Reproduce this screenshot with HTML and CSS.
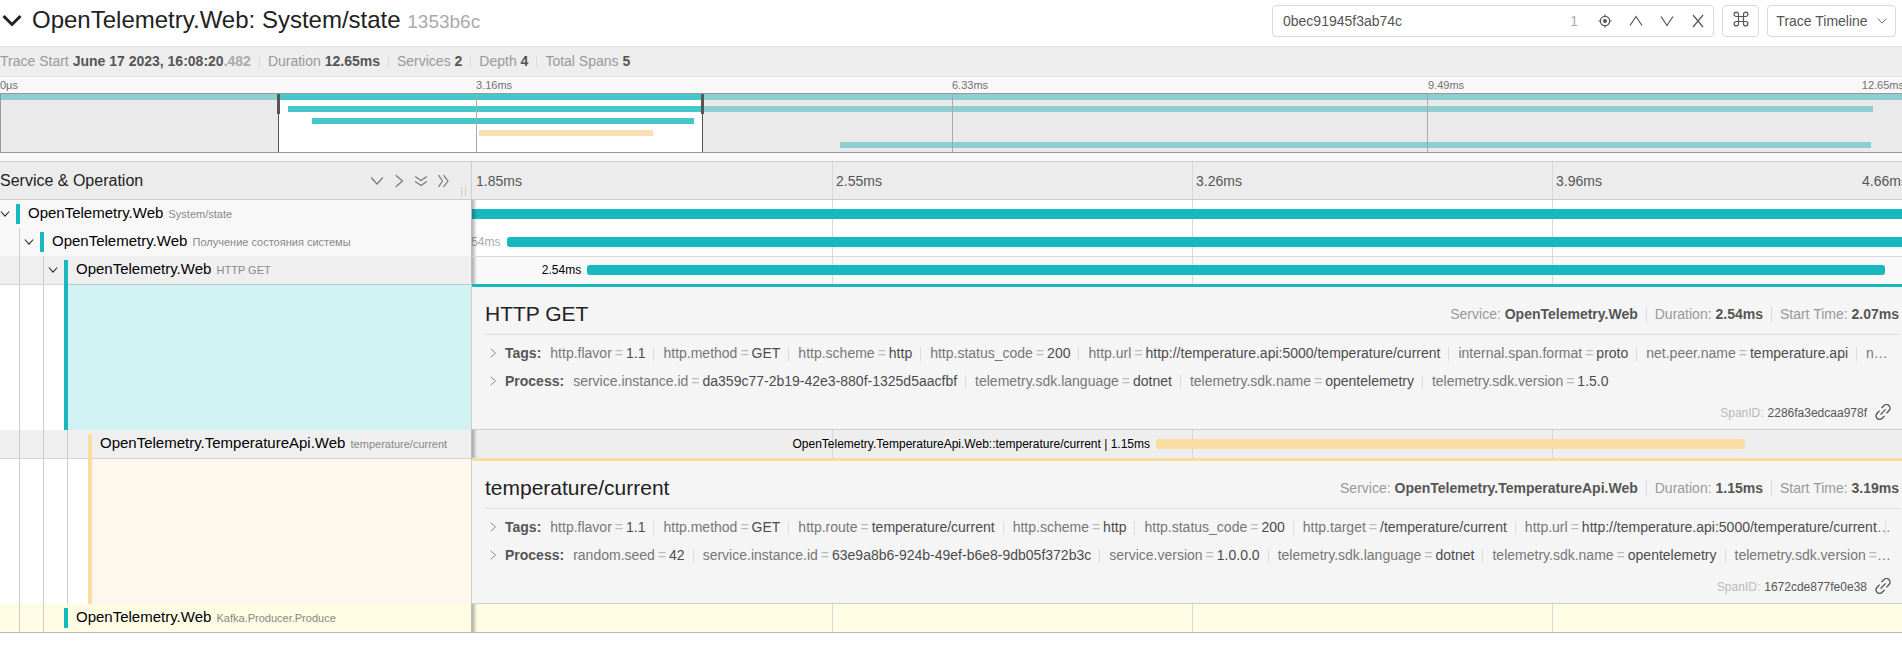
FILE: index.html
```html
<!DOCTYPE html>
<html lang="en">
<head>
<meta charset="utf-8">
<title>OpenTelemetry.Web: System/state</title>
<link rel="stylesheet" href="styles.css">
</head>
<body>
<svg class="defs" aria-hidden="true">
  <symbol id="down" viewBox="0 0 14 14"><path d="M1.200 3.500 7 10l5.800-6.500"/></symbol>
  <symbol id="up" viewBox="0 0 14 14"><path d="M1 11.500 7 2.500l6 9"/></symbol>
  <symbol id="right" viewBox="0 0 14 14"><path d="M3.800 1.200 10.500 7l-6.700 5.800"/></symbol>
  <symbol id="link" viewBox="0 0 14 14"><path d="M5.600 3.600 7.700 1.500a2.900 2.900 0 0 1 4.600 4.200L10 8.200M8.400 10.400 6.300 12.500a2.900 2.900 0 0 1-4.600-4.200L4 5.800M4.900 9.300l4.300-4.600"/></symbol>
</svg>
<div class="page">
  <header class="trace-header">
    <button class="title-toggle" aria-label="Collapse"><svg class="chevron" viewBox="0 0 20 14"><path d="m1.500 2 8.500 8.500L18.500 2"/></svg></button>
    <h1 class="title">OpenTelemetry.Web: System/state <small>1353b6c</small></h1>
    <div class="search">
      <input class="search-input" type="text" value="0bec91945f3ab74c" aria-label="Find">
      <span class="search-count">1</span>
      <button class="search-btn" aria-label="Locate"><svg class="icon" viewBox="0 0 14 14"><circle cx="7" cy="7" r="4.700"/><circle class="solid" cx="7" cy="7" r="2"/><path d="M7 .5v2M7 11.500v2M.5 7h2M11.500 7h2"/></svg></button>
      <button class="search-btn" aria-label="Previous"><svg class="icon"><use href="#up"/></svg></button>
      <button class="search-btn" aria-label="Next"><svg class="icon flip"><use href="#up"/></svg></button>
      <button class="search-btn" aria-label="Clear"><svg class="icon" viewBox="0 0 14 14"><path d="m2 1 10 12M12 1 2 13"/></svg></button>
    </div>
    <button class="btn shortcuts" aria-label="Keyboard shortcuts"><svg class="command" viewBox="0 0 16 16"><path d="M5.500 5.500h5v5h-5zM5.500 5.500H3.300a2.200 2.200 0 1 1 2.200-2.200zM10.500 5.500V3.300a2.200 2.200 0 1 1 2.200 2.200zM10.500 10.500h2.200a2.200 2.200 0 1 1-2.200 2.200zM5.500 10.500v2.200a2.200 2.200 0 1 1-2.200-2.200z"/></svg></button>
    <button class="btn view-menu">Trace Timeline <svg class="icon-s"><use href="#down"/></svg></button>
  </header>

  <ul class="overview">
    <li>Trace Start <b>June 17 2023, 16:08:20<i>.482</i></b></li>
    <li>Duration <b>12.65ms</b></li>
    <li>Services <b>2</b></li>
    <li>Depth <b>4</b></li>
    <li>Total Spans <b>5</b></li>
  </ul>

  <section class="minimap">
    <div class="mini-ticks"><span>0μs</span><span>3.16ms</span><span>6.33ms</span><span>9.49ms</span><span class="last">12.65ms</span></div>
    <div class="mini-graph">
      <div class="mini-rows">
        <div class="mini-bar" style="margin-left:0;width:100%"></div>
        <div class="mini-bar" style="margin-left:15.1%;width:83.3%"></div>
        <div class="mini-bar" style="margin-left:16.35%;width:20.1%"></div>
        <div class="mini-bar sand" style="margin-left:25.15%;width:9.15%"></div>
        <div class="mini-bar" style="margin-left:44.1%;width:54.2%"></div>
      </div>
      <div class="shade" style="left:0;width:14.6%"></div>
      <div class="shade" style="left:36.9%;right:0"></div>
      <div class="mini-grid"><i></i><i></i><i></i><i></i></div>
      <div class="scrub" style="left:14.57%"></div>
      <div class="scrub" style="left:36.85%"></div>
    </div>
  </section>

  <main class="timeline">
    <div class="row head">
      <div class="name-col">
        <h2 class="head-title">Service &amp; Operation</h2>
        <button class="collapser" aria-label="Expand +1"><svg class="icon"><use href="#down"/></svg></button>
        <button class="collapser" aria-label="Collapse +1"><svg class="icon"><use href="#right"/></svg></button>
        <button class="collapser" aria-label="Expand All"><svg class="icon" viewBox="0 0 14 14"><path d="m1.200 2.500 5.800 4 5.800-4M1.200 7.500l5.800 4 5.800-4"/></svg></button>
        <button class="collapser" aria-label="Collapse All"><svg class="icon" viewBox="0 0 14 14"><path d="m2.500 1.200 4 5.800-4 5.800M7.500 1.200l4.500 5.800-4.500 5.800"/></svg></button>
        <span class="grip"></span>
      </div>
      <div class="view-col ticks"><span>1.85ms</span><span>2.55ms</span><span>3.26ms</span><span>3.96ms</span><span class="last">4.66ms</span></div>
    </div>

    <div class="row span">
      <div class="name-col">
        <button class="toggle" aria-label="Collapse"><svg class="icon-s"><use href="#down"/></svg></button>
        <a class="name" href="#s1">OpenTelemetry.Web <small>System/state</small></a>
      </div>
      <div class="view-col ticks"><i></i><i></i><i></i><i></i><div class="track"><div class="bar" style="margin-left:0;width:100%"></div></div></div>
    </div>

    <div class="row span">
      <div class="name-col">
        <i class="guide"></i>
        <button class="toggle" aria-label="Collapse"><svg class="icon-s"><use href="#down"/></svg></button>
        <a class="name" href="#s2">OpenTelemetry.Web <small>Получение состояния системы</small></a>
      </div>
      <div class="view-col ticks"><i></i><i></i><i></i><i></i><div class="track"><div class="bar round" style="margin-left:2.4%;width:99%"><span class="label dim">10.54ms</span></div></div></div>
    </div>

    <div class="row span open">
      <div class="name-col">
        <i class="guide"></i><i class="guide"></i>
        <button class="toggle" aria-label="Collapse"><svg class="icon-s"><use href="#down"/></svg></button>
        <a class="name" href="#s3">OpenTelemetry.Web <small>HTTP GET</small></a>
      </div>
      <div class="view-col ticks"><i></i><i></i><i></i><i></i><div class="track"><div class="bar round" style="margin-left:8%;width:90.1%"><span class="label">2.54ms</span></div></div></div>
    </div>

    <div class="row detail">
      <div class="name-col">
        <i class="guide"></i><i class="guide"></i><i class="gap"></i><div class="tint"></div>
      </div>
      <section class="view-col panel">
        <div class="panel-head">
          <h2>HTTP GET</h2>
          <ul class="facts"><li>Service: <b>OpenTelemetry.Web</b></li><li>Duration: <b>2.54ms</b></li><li>Start Time: <b>2.07ms</b></li></ul>
        </div>
        <div class="kv"><svg class="icon-s"><use href="#right"/></svg><b>Tags:</b><ul><li>http.flavor<i>=</i><em>1.1</em></li><li>http.method<i>=</i><em>GET</em></li><li>http.scheme<i>=</i><em>http</em></li><li>http.status_code<i>=</i><em>200</em></li><li>http.url<i>=</i><em>http://temperature.api:5000/temperature/current</em></li><li>internal.span.format<i>=</i><em>proto</em></li><li>net.peer.name<i>=</i><em>temperature.api</em></li><li>net.peer.port<i>=</i><em>5000</em></li></ul></div>
        <div class="kv"><svg class="icon-s"><use href="#right"/></svg><b>Process:</b><ul><li>service.instance.id<i>=</i><em>da359c77-2b19-42e3-880f-1325d5aacfbf</em></li><li>telemetry.sdk.language<i>=</i><em>dotnet</em></li><li>telemetry.sdk.name<i>=</i><em>opentelemetry</em></li><li>telemetry.sdk.version<i>=</i><em>1.5.0</em></li></ul></div>
        <div class="span-id"><span>SpanID:</span> 2286fa3edcaa978f <button class="copy" aria-label="Copy link"><svg class="icon-l"><use href="#link"/></svg></button></div>
      </section>
    </div>

    <div class="row span sand open-alt">
      <div class="name-col">
        <i class="guide"></i><i class="guide"></i><i class="guide"></i><i class="gap"></i>
        <a class="name" href="#s4">OpenTelemetry.TemperatureApi.Web <small>temperature/current</small></a>
      </div>
      <div class="view-col ticks"><i></i><i></i><i></i><i></i><div class="track"><div class="bar round" style="margin-left:47.5%;width:40.9%"><span class="label">OpenTelemetry.TemperatureApi.Web::temperature/current | 1.15ms</span></div></div></div>
    </div>

    <div class="row detail sand">
      <div class="name-col">
        <i class="guide"></i><i class="guide"></i><i class="guide"></i><i class="gap"></i><div class="tint"></div>
      </div>
      <section class="view-col panel">
        <div class="panel-head">
          <h2>temperature/current</h2>
          <ul class="facts"><li>Service: <b>OpenTelemetry.TemperatureApi.Web</b></li><li>Duration: <b>1.15ms</b></li><li>Start Time: <b>3.19ms</b></li></ul>
        </div>
        <div class="kv"><svg class="icon-s"><use href="#right"/></svg><b>Tags:</b><ul><li>http.flavor<i>=</i><em>1.1</em></li><li>http.method<i>=</i><em>GET</em></li><li>http.route<i>=</i><em>temperature/current</em></li><li>http.scheme<i>=</i><em>http</em></li><li>http.status_code<i>=</i><em>200</em></li><li>http.target<i>=</i><em>/temperature/current</em></li><li>http.url<i>=</i><em>http://temperature.api:5000/temperature/current</em></li><li>internal.span.format<i>=</i><em>proto</em></li></ul></div>
        <div class="kv"><svg class="icon-s"><use href="#right"/></svg><b>Process:</b><ul><li>random.seed<i>=</i><em>42</em></li><li>service.instance.id<i>=</i><em>63e9a8b6-924b-49ef-b6e8-9db05f372b3c</em></li><li>service.version<i>=</i><em>1.0.0.0</em></li><li>telemetry.sdk.language<i>=</i><em>dotnet</em></li><li>telemetry.sdk.name<i>=</i><em>opentelemetry</em></li><li>telemetry.sdk.version<i>=</i><em>1.5.0</em></li></ul></div>
        <div class="span-id"><span>SpanID:</span> 1672cde877fe0e38 <button class="copy" aria-label="Copy link"><svg class="icon-l"><use href="#link"/></svg></button></div>
      </section>
    </div>

    <div class="row span match">
      <div class="name-col">
        <i class="guide"></i><i class="guide"></i><i class="gap"></i>
        <a class="name" href="#s5">OpenTelemetry.Web <small>Kafka.Producer.Produce</small></a>
      </div>
      <div class="view-col ticks"><i></i><i></i><i></i><i></i></div>
    </div>
  </main>
</div>
</body>
</html>
```
FILE: styles.css
```css
* { box-sizing: border-box; }

body {
  margin: 0;
  overflow: hidden;
  background: #fff;
  color: #555;
  font: 14px/20px "Liberation Sans", Arial, sans-serif;
}

/* The content bleeds past both window edges. */
.page { margin: 0 -10px 0 -8px; }

h1, h2, ul { margin: 0; padding: 0; font-weight: 400; }
ul { list-style: none; }
i, em { font-style: normal; }
a { color: inherit; text-decoration: none; }
button {
  display: flex;
  align-items: center;
  justify-content: center;
  padding: 0;
  border: 0;
  background: none;
  color: inherit;
  font: inherit;
  cursor: pointer;
}

.defs { display: none; }
svg { flex: none; fill: none; stroke: currentColor; stroke-width: 1.2; }
.icon { width: 14px; height: 14px; }
.icon-s { width: 10px; height: 10px; }
.icon-l { width: 16px; height: 16px; }
.flip { transform: rotate(180deg); }
.solid { fill: currentColor; stroke: none; }

/* Header */
.trace-header {
  display: flex;
  align-items: center;
  height: 47px;
  padding: 0 16px 5px 8px;
  border-bottom: 1px solid #e4e4e4;
}
.title-toggle { justify-content: flex-start; width: 32px; padding-left: 2px; color: #222; }
.chevron { width: 20px; height: 14px; stroke-width: 3; }
.title { flex: 1; color: #222; font-size: 24px; line-height: 32px; white-space: nowrap; }
.title small { color: #aaa; font-size: 19px; }

.search {
  display: flex;
  align-items: center;
  width: 442px;
  height: 32px;
  border: 1px solid #d9d9d9;
  border-radius: 4px;
}
.search-input {
  flex: 1;
  min-width: 0;
  padding: 0 10px;
  border: 0;
  outline: 0;
  background: none;
  color: #555;
  font: inherit;
}
.search-count { padding-right: 11px; color: #aaa; }
.search-btn { width: 31px; height: 30px; }
.btn {
  height: 32px;
  margin-left: 8px;
  border: 1px solid #d9d9d9;
  border-radius: 4px;
  background: #fff;
}
.shortcuts { width: 37px; padding-bottom: 3px; }
.command { width: 16px; height: 16px; }
.view-menu { gap: 9px; width: 129px; }

/* Overview facts */
.overview {
  display: flex;
  height: 30px;
  padding: 4px 8px;
  border-bottom: 1px solid #e4e4e4;
  background: #eee;
  color: #999;
}
.overview li { line-height: 21px; }
.overview li + li { margin-left: 8px; padding-left: 9px; background: linear-gradient(#ddd, #ddd) 0 5px / 1px 12px no-repeat; }
.overview b { color: #555; }
.overview b i { color: #aaa; }

/* Minimap */
.minimap { padding: 0 8px 8px; background: #f8f8f8; }
.mini-ticks {
  display: grid;
  grid-template-columns: repeat(4, 1fr);
  position: relative;
  height: 16px;
  color: #717171;
  font-size: 11px;
  line-height: 17px;
}
.last { position: absolute; right: 0; }
.mini-graph { position: relative; border: 1px solid #999; background: #fff; }
.mini-rows { display: grid; gap: 6px; padding-bottom: 4px; }
.mini-bar { height: 6px; background: #46c7cb; }
.mini-bar.sand { background: #fae1b3; }
.shade { position: absolute; top: 0; bottom: 0; background: rgba(214, 214, 214, .5); }
.mini-grid {
  display: grid;
  grid-template-columns: repeat(4, 1fr);
  position: absolute;
  inset: 0 0 0 -1px;
}
.mini-grid i + i { border-left: 1px solid #aaa; }
.scrub { position: absolute; top: 0; bottom: 0; width: 1px; background: #555; }
.scrub::before {
  content: "";
  position: absolute;
  top: 0;
  left: -1px;
  width: 3px;
  height: 20px;
  background: #555;
}

/* Timeline */
.timeline { --accent: #17b8be; --tint: #d1f1f2; border-top: 1px solid #ccc; border-bottom: 1px solid #bbb; }
.sand { --accent: #f8dca1; --tint: #fef7eb; }
.row { display: grid; grid-template-columns: 1fr 3fr; }
.name-col { display: flex; position: relative; min-width: 0; padding-left: 8px; border-right: 1px solid #ccc; }
.view-col { position: relative; min-width: 0; overflow: hidden; }
.ticks { display: grid; grid-template-columns: repeat(4, 1fr); }
.ticks > i + i, .ticks > span + span:not(.last) { border-left: 1px solid #d8d8d8; }

.head { height: 38px; border-bottom: 1px solid #ccc; background: #ececec; }
.head .name-col { align-items: center; padding-right: 17px; }
.head .ticks { line-height: 38px; }
.head .ticks span { padding-left: 4px; }
.head .ticks span + span { padding-left: 3px; }
.head .last { right: 4px; }
.head-title { flex: 1; color: #222; font-size: 16px; }
.collapser { width: 22px; height: 22px; color: #777; }
.grip { position: absolute; right: 5px; bottom: 3px; width: 5px; height: 9px; border: solid #ccc; border-width: 0 1px; }

.span { height: 28px; }
.span .name-col { border-right-color: #bbb; background: #f8f8f8; }
.span .view-col::after {
  content: "";
  position: absolute;
  inset: 0 auto 0 0;
  width: 5px;
  background: linear-gradient(to right, rgba(0, 0, 0, .3), rgba(0, 0, 0, 0));
}
.guide { flex: none; width: 20px; border-right: 1px solid #ccc; }
.guide + .guide { width: 24px; }
.gap { flex: none; width: 20px; }
.toggle { justify-content: flex-start; width: 16px; color: #222; }
.guide + .toggle { width: 20px; padding-left: 4px; }
.toggle svg { stroke-width: 1.5; }
.name {
  height: 20px;
  margin-top: 4px;
  padding-left: 8px;
  border-left: 4px solid var(--accent);
  color: #000;
  font-size: 15px;
  line-height: 18px;
  white-space: nowrap;
}
.name small { margin-left: 1px; color: #888; font-size: 11px; }
.track { position: absolute; inset: 9px 0; }
.bar { position: relative; height: 10px; background: var(--accent); }
.round { border-radius: 3px; }
.label { position: absolute; right: 100%; padding-right: 6px; color: #000; font-size: 12px; line-height: 11px; white-space: nowrap; }
.dim { color: #aaa; }

.open .name, .open-alt .name { height: 24px; }
.open .name-col, .open-alt .name-col { background: #efefef; }
.open .view-col { border-top: 1px solid #d8d8d8; background: #f8f8f8; }
.open-alt .view-col { background: #eee; }
.open .track { inset: 8px 0; }
.match .name-col, .match .view-col { background: #fffce4; }

/* Span detail */
.detail .name-col { background: linear-gradient(#d8d8d8, #d8d8d8) 0 0 / 100% 1px no-repeat; }
.tint { flex: 1; border-left: 4px solid var(--accent); background: linear-gradient(rgba(0, 0, 0, .15), rgba(0, 0, 0, .15)) 0 0 / 100% 1px no-repeat var(--tint); }
.panel { padding: 10px 13px 0; border-top: 3px solid var(--accent); border-bottom: 1px solid #ccc; background: #f5f5f5; }
.panel-head { display: flex; align-items: center; height: 38px; margin-bottom: 4px; padding-bottom: 3px; border-bottom: 1px solid #ddd; }
.panel-head h2 { flex: 1; color: #222; font-size: 21px; line-height: 28px; }
.facts { display: flex; color: #999; }
.facts b { color: #555; }
.facts li + li, .kv li + li { margin-left: 8px; padding-left: 10px; background: linear-gradient(#ddd, #ddd) 0 2px / 1px 16px no-repeat; }
.facts li + li { padding-left: 9px; }
.kv { display: flex; align-items: center; gap: 7px; height: 28px; padding: 0 7px 0 3px; color: #777; }
.kv b { color: #555; }
.kv ul { flex: 1; min-width: 0; margin-left: 2px; overflow: hidden; text-overflow: ellipsis; white-space: nowrap; }
.kv li { display: inline; }
.kv i { padding: 0 3px; color: #bbb; }
.kv em { color: #4c4c4c; }
.span-id { display: flex; align-items: center; justify-content: flex-end; gap: 4px; height: 26px; margin: 5px 0 3px; padding-right: 4px; font-size: 12px; }
.span-id span { color: #bbb; }
.copy { width: 24px; height: 22px; padding-bottom: 2px; }
```
